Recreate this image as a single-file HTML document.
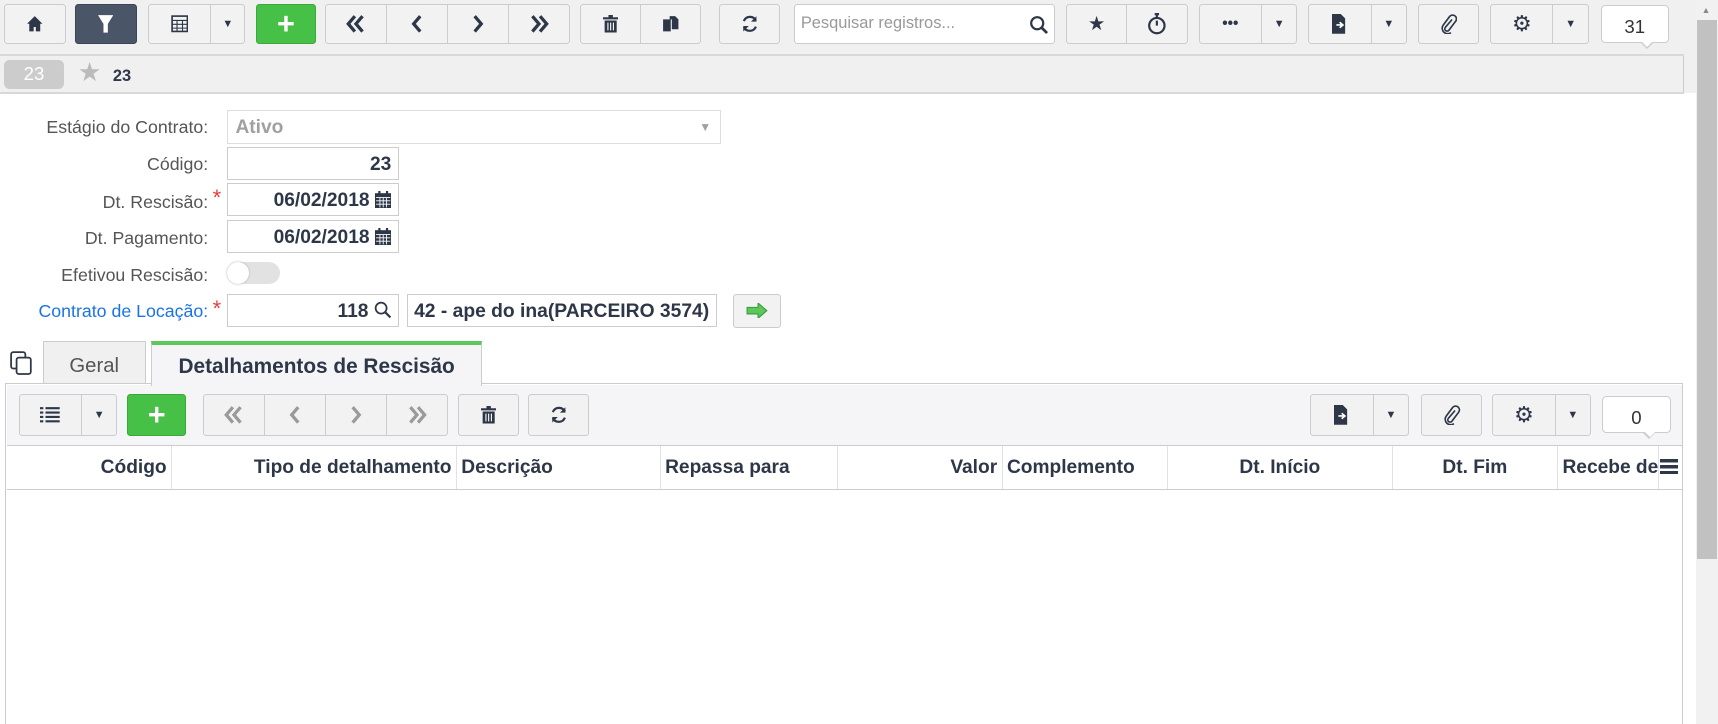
<!DOCTYPE html>
<html><head><meta charset="utf-8"><style>
html{zoom:1.0957}
body{margin:0;width:1568px;height:661px;overflow:hidden;background:#fff;font-family:"Liberation Sans",sans-serif;position:relative;color:#2d3748}
.a{position:absolute}
.btn{position:absolute;top:4px;height:36px;background:#f2f2f2;border:1px solid #ccc;border-radius:3px;box-sizing:border-box;display:flex}
.btn>div{flex:1;display:flex;align-items:center;justify-content:center;border-right:1px solid #ccc;color:#2d3748;font-size:18px}
.btn>div:last-child{border-right:0}
.car{font-size:10px!important}
.lbl{position:absolute;right:1378px;font-size:16.2px;color:#555;text-align:right;white-space:nowrap}
.inp{position:absolute;height:30px;border:1px solid #ccc;box-sizing:border-box;font-size:17.5px;font-weight:bold;display:flex;align-items:center;justify-content:flex-end;padding-right:6px;padding-top:3px;white-space:nowrap}
.inp svg{margin-top:-3px}
.req{color:#e53e3e;position:absolute;left:194px;font-size:20px}
.th{position:absolute;top:407px;height:39px;line-height:41px;font-size:17.5px;font-weight:bold;border-right:1px solid #e2e2e2;box-sizing:border-box;padding:0 4px;white-space:nowrap}
</style></head><body>
<svg width="0" height="0" style="position:absolute"><defs>
<symbol id="l2" viewBox="0 0 20 18"><path d="M9 2L3 9l6 7M16 2l-6 7 6 7" fill="none" stroke="currentColor" stroke-width="3"/></symbol>
<symbol id="l1" viewBox="0 0 20 18"><path d="M13 2L7 9l6 7" fill="none" stroke="currentColor" stroke-width="3"/></symbol>
<symbol id="r1" viewBox="0 0 20 18"><path d="M7 2l6 7-6 7" fill="none" stroke="currentColor" stroke-width="3"/></symbol>
<symbol id="r2" viewBox="0 0 20 18"><path d="M4 2l6 7-6 7M11 2l6 7-6 7" fill="none" stroke="currentColor" stroke-width="3"/></symbol>
</defs></svg>
<div class="a" style="left:0;top:0;width:1548px;height:85px;background:#f0f0f0"></div>
<div class="a" style="left:0;top:49px;width:1537px;height:2px;background:#d8d8d8"></div>
<div class="a" style="left:0;top:84px;width:1537px;height:2px;background:#d8d8d8"></div>
<div class="a" style="left:1536px;top:51px;width:1px;height:34px;background:#ccc"></div>

<div class="btn" style="left:4px;width:56px"><div><svg width="16" height="16" viewBox="0 0 16 16"><path d="M8 1L1 8h2v7h4v-4h2v4h4V8h2z" fill="#2d3748"/></svg></div></div>
<div class="btn" style="left:68px;width:57px;background:#4a5568;border-color:#3a4455"><div><svg width="14" height="18" viewBox="0 0 14 18"><path d="M0 1h14L9 9v8H5V9z" fill="#fff"/></svg></div></div>
<div class="btn" style="left:135px;width:89px"><div style="flex:0 0 56px"><svg width="16" height="16" viewBox="0 0 16 16"><rect x="1" y="1" width="14" height="14" fill="none" stroke="#2d3748" stroke-width="1.5"/><path d="M1 5h14M1 8.5h14M1 12h14M5.5 5v10M10.5 5v10" stroke="#2d3748"/></svg></div><div class="car">▼</div></div>
<div class="btn" style="left:234px;width:54px;background:#46c046;border-color:#3aa83a"><div style="color:#fff;font-size:28px;font-weight:bold">+</div></div>
<div class="btn" style="left:297px;width:223px;color:#2d3748"><div><svg width="20" height="18"><use href="#l2"/></svg></div><div><svg width="20" height="18"><use href="#l1"/></svg></div><div><svg width="20" height="18"><use href="#r1"/></svg></div><div><svg width="20" height="18"><use href="#r2"/></svg></div></div>
<div class="btn" style="left:529px;width:111px"><div><svg width="14" height="16" viewBox="0 0 14 16"><path d="M0 2h14v2H0zM5 0h4v2H5zM1.5 5h11v11h-11z" fill="#2d3748"/><path d="M4.5 7v7M7 7v7M9.5 7v7" stroke="#fff"/></svg></div><div><svg width="16" height="16" viewBox="0 0 16 16"><path d="M1 4h7v11H1zM7 1h5l3 3v9H9V4H7z" fill="#2d3748"/></svg></div></div>
<div class="btn" style="left:656px;width:56px"><div><svg width="18" height="18" viewBox="0 0 18 18"><path d="M14.5 6A6 6 0 0 0 3.5 6.5M3.5 12A6 6 0 0 0 14.5 11.5" fill="none" stroke="#2d3748" stroke-width="2"/><path d="M15 2v5h-5zM3 16v-5h5z" fill="#2d3748"/></svg></div></div>
<div class="a" style="left:725px;top:4px;width:238px;height:36px;background:#fff;border:1px solid #ccc;box-sizing:border-box;border-radius:3px;font-size:15px;color:#999;line-height:34px;padding-left:5px">Pesquisar registros...<svg style="position:absolute;right:5px;top:9px" width="18" height="18" viewBox="0 0 18 18"><circle cx="7.5" cy="7.5" r="5.5" fill="none" stroke="#2d3748" stroke-width="2"/><path d="M11.5 11.5l5 5" stroke="#2d3748" stroke-width="2.5"/></svg></div>
<div class="btn" style="left:973px;width:111px"><div>★</div><div><svg width="18" height="20" viewBox="0 0 18 20"><circle cx="9" cy="11.5" r="7" fill="none" stroke="#2d3748" stroke-width="2"/><path d="M7 1h4M9 1v3M9 11.5V7" stroke="#2d3748" stroke-width="2"/></svg></div></div>
<div class="btn" style="left:1094px;width:90px"><div style="flex:0 0 56px;font-weight:bold;font-size:14px">•••</div><div class="car">▼</div></div>
<div class="btn" style="left:1194px;width:90px"><div style="flex:0 0 56px"><svg width="14" height="18" viewBox="0 0 14 18"><path d="M0 0h8l4 4v14H0z" fill="#2d3748"/><path d="M4 10h5M7 7.5l3 2.5-3 2.5" stroke="#fff" stroke-width="1.5" fill="none"/></svg></div><div class="car">▼</div></div>
<div class="btn" style="left:1294px;width:56px"><div><svg width="16" height="18" viewBox="0 0 16 18"><path d="M11 5l-6 7a2 2 0 0 0 3 3l6-8a3.5 3.5 0 0 0-5-5L3 10a5 5 0 0 0 7 7" fill="none" stroke="#2d3748" stroke-width="1.5"/></svg></div></div>
<div class="btn" style="left:1360px;width:90px"><div style="flex:0 0 56px;font-size:20px">⚙</div><div class="car">▼</div></div>
<div class="a" style="left:1461px;top:5px;width:62px;height:34px;background:#fff;border:1px solid #ccc;border-radius:4px;box-sizing:border-box;text-align:center;line-height:38px;font-size:17px;color:#333">31</div>
<div class="a" style="left:1497px;top:38px;width:0;height:0;border:7px solid transparent;border-top-color:#ccc;border-bottom:0"></div>
<div class="a" style="left:1498px;top:37px;width:0;height:0;border:6px solid transparent;border-top-color:#fff;border-bottom:0"></div>

<div class="a" style="left:1548px;top:0;width:20px;height:661px;background:#f1f1f1"></div>
<div class="a" style="left:1549px;top:18px;width:18px;height:492px;background:#c1c1c1"></div>
<div class="a" style="left:1553px;top:5px;font-size:8px;color:#888">▲</div>

<div class="a" style="left:4px;top:55px;width:54px;height:26px;background:#ccc;border-radius:5px;color:#fff;font-size:17px;text-align:center;line-height:26px">23</div>
<div class="a" style="left:71px;top:52px;font-size:24px;color:#bbb">★</div>
<div class="a" style="left:103px;top:61px;font-size:15px;font-weight:bold">23</div>

<div class="lbl" style="top:107px">Estágio do Contrato:</div>
<div class="a" style="left:207px;top:100px;width:451px;height:31px;border:1px solid #ddd;box-sizing:border-box;font-size:17.5px;font-weight:bold;color:#a0a0a0;line-height:31px;padding-left:7px">Ativo<span style="position:absolute;right:8px;font-size:11px">▼</span></div>
<div class="lbl" style="top:141px">Código:</div>
<div class="inp" style="left:207px;top:134px;width:157px">23</div>
<div class="lbl" style="top:175px">Dt. Rescisão:</div><div class="req" style="top:169px">*</div>
<div class="inp" style="left:207px;top:167px;width:157px">06/02/2018&nbsp;<svg width="15" height="16" viewBox="0 0 15 16"><rect x="0" y="2" width="15" height="14" fill="#2d3748"/><path d="M1 6h13M1 9h13M1 12h13M4.5 6v9M7.5 6v9M10.5 6v9" stroke="#fff" stroke-width=".8"/><rect x="3" y="0" width="2" height="3" fill="#2d3748"/><rect x="10" y="0" width="2" height="3" fill="#2d3748"/></svg></div>
<div class="lbl" style="top:208px">Dt. Pagamento:</div>
<div class="inp" style="left:207px;top:201px;width:157px">06/02/2018&nbsp;<svg width="15" height="16" viewBox="0 0 15 16"><rect x="0" y="2" width="15" height="14" fill="#2d3748"/><path d="M1 6h13M1 9h13M1 12h13M4.5 6v9M7.5 6v9M10.5 6v9" stroke="#fff" stroke-width=".8"/><rect x="3" y="0" width="2" height="3" fill="#2d3748"/><rect x="10" y="0" width="2" height="3" fill="#2d3748"/></svg></div>
<div class="lbl" style="top:242px">Efetivou Rescisão:</div>
<div class="a" style="left:207px;top:239px;width:49px;height:20px;border-radius:10px;background:#e2e2e2"></div>
<div class="a" style="left:207px;top:239px;width:20px;height:20px;border-radius:10px;background:#fff;box-shadow:0 0 2px #aaa"></div>
<div class="lbl" style="top:275px;color:#1a73e8">Contrato de Locação:</div><div class="req" style="top:270px">*</div>
<div class="inp" style="left:207px;top:268px;width:157px">118&nbsp;<svg width="16" height="16" viewBox="0 0 16 16"><circle cx="6.5" cy="6.5" r="5" fill="none" stroke="#2d3748" stroke-width="1.6"/><path d="M10 10l5 5" stroke="#2d3748" stroke-width="2"/></svg></div>
<div class="inp" style="left:371px;top:268px;width:283px;justify-content:flex-start;padding-left:6px;font-size:17.6px;overflow:hidden">42 - ape do ina(PARCEIRO 3574)</div>
<div class="a" style="left:669px;top:268px;width:44px;height:31px;background:#f2f2f2;border:1px solid #ccc;border-radius:3px;box-sizing:border-box;display:flex;align-items:center;justify-content:center"><svg width="20" height="14" viewBox="0 0 20 14"><path d="M1 4h10V0l8 7-8 7v-4H1z" fill="#5cc85c" stroke="#3a9a3a"/></svg></div>

<svg class="a" style="left:9px;top:320px" width="22" height="22" viewBox="0 0 22 22"><rect x="1" y="1" width="13" height="15" rx="2" fill="none" stroke="#2d3748" stroke-width="1.6"/><rect x="6" y="6" width="13" height="15" rx="2" fill="#fff" stroke="#2d3748" stroke-width="1.6"/></svg>
<div class="a" style="left:39px;top:311px;width:94px;height:40px;background:#f0f0f0;border:1px solid #ccc;border-bottom:0;box-sizing:border-box;text-align:center;line-height:44px;font-size:18.5px;color:#555">Geral</div>
<div class="a" style="left:5px;top:350px;width:1531px;height:311px;border:1px solid #ccc;border-bottom:0;box-sizing:border-box;background:#fff"></div>
<div class="a" style="left:6px;top:351px;width:1529px;height:55px;background:#f5f5f7"></div>
<div class="a" style="left:138px;top:311px;width:302px;height:41px;background:#f5f5f7;border:1px solid #ccc;border-top:4px solid #5cc85c;border-bottom:0;box-sizing:border-box;text-align:center;line-height:40px;font-size:19px;font-weight:bold;white-space:nowrap">Detalhamentos de Rescisão</div>

<div class="btn" style="left:17px;top:360px;width:90px;height:38px"><div style="flex:0 0 56px"><svg width="18" height="16" viewBox="0 0 18 16"><path d="M0 2h3M5 2h13M0 6h3M5 6h13M0 10h3M5 10h13M0 14h3M5 14h13" stroke="#2d3748" stroke-width="2"/></svg></div><div class="car">▼</div></div>
<div class="btn" style="left:116px;top:360px;width:54px;height:38px;background:#46c046;border-color:#3aa83a"><div style="color:#fff;font-size:28px;font-weight:bold">+</div></div>
<div class="btn" style="left:185px;top:360px;width:224px;height:38px"><div style="color:#9a9a9a"><svg width="20" height="18"><use href="#l2"/></svg></div><div style="color:#9a9a9a"><svg width="20" height="18"><use href="#l1"/></svg></div><div style="color:#9a9a9a"><svg width="20" height="18"><use href="#r1"/></svg></div><div style="color:#9a9a9a"><svg width="20" height="18"><use href="#r2"/></svg></div></div>
<div class="btn" style="left:418px;top:360px;width:56px;height:38px"><div><svg width="14" height="16" viewBox="0 0 14 16"><path d="M0 2h14v2H0zM5 0h4v2H5zM1.5 5h11v11h-11z" fill="#2d3748"/><path d="M4.5 7v7M7 7v7M9.5 7v7" stroke="#fff"/></svg></div></div>
<div class="btn" style="left:482px;top:360px;width:56px;height:38px"><div><svg width="18" height="18" viewBox="0 0 18 18"><path d="M14.5 6A6 6 0 0 0 3.5 6.5M3.5 12A6 6 0 0 0 14.5 11.5" fill="none" stroke="#2d3748" stroke-width="2"/><path d="M15 2v5h-5zM3 16v-5h5z" fill="#2d3748"/></svg></div></div>
<div class="btn" style="left:1196px;top:360px;width:90px;height:38px"><div style="flex:0 0 56px"><svg width="14" height="18" viewBox="0 0 14 18"><path d="M0 0h8l4 4v14H0z" fill="#2d3748"/><path d="M4 10h5M7 7.5l3 2.5-3 2.5" stroke="#fff" stroke-width="1.5" fill="none"/></svg></div><div class="car">▼</div></div>
<div class="btn" style="left:1297px;top:360px;width:56px;height:38px"><div><svg width="16" height="18" viewBox="0 0 16 18"><path d="M11 5l-6 7a2 2 0 0 0 3 3l6-8a3.5 3.5 0 0 0-5-5L3 10a5 5 0 0 0 7 7" fill="none" stroke="#2d3748" stroke-width="1.5"/></svg></div></div>
<div class="btn" style="left:1362px;top:360px;width:90px;height:38px"><div style="flex:0 0 56px;font-size:20px">⚙</div><div class="car">▼</div></div>
<div class="a" style="left:1462px;top:361px;width:63px;height:34px;background:#fff;border:1px solid #ccc;border-radius:4px;box-sizing:border-box;text-align:center;line-height:38px;font-size:17px;color:#333">0</div>
<div class="a" style="left:1499px;top:394px;width:0;height:0;border:7px solid transparent;border-top-color:#ccc;border-bottom:0"></div>
<div class="a" style="left:1500px;top:393px;width:0;height:0;border:6px solid transparent;border-top-color:#fff;border-bottom:0"></div>

<div class="a" style="left:6px;top:406px;width:1529px;height:1px;background:#ccc"></div>
<div class="a" style="left:6px;top:446px;width:1529px;height:1px;background:#ccc"></div>
<div class="th" style="left:6px;width:151px;text-align:right">Código</div>
<div class="th" style="left:157px;width:260px;text-align:right">Tipo de detalhamento</div>
<div class="th" style="left:417px;width:186px">Descrição</div>
<div class="th" style="left:603px;width:162px">Repassa para</div>
<div class="th" style="left:765px;width:150px;text-align:right">Valor</div>
<div class="th" style="left:915px;width:151px">Complemento</div>
<div class="th" style="left:1066px;width:205px;text-align:center">Dt. Início</div>
<div class="th" style="left:1271px;width:151px;text-align:center">Dt. Fim</div>
<div class="th" style="left:1422px;width:92px;overflow:hidden">Recebe de</div>
<div class="a" style="left:1515px;top:419px;width:16px;height:14px;background:repeating-linear-gradient(#2d3748 0 3px,transparent 3px 5.5px)"></div>
</body></html>
